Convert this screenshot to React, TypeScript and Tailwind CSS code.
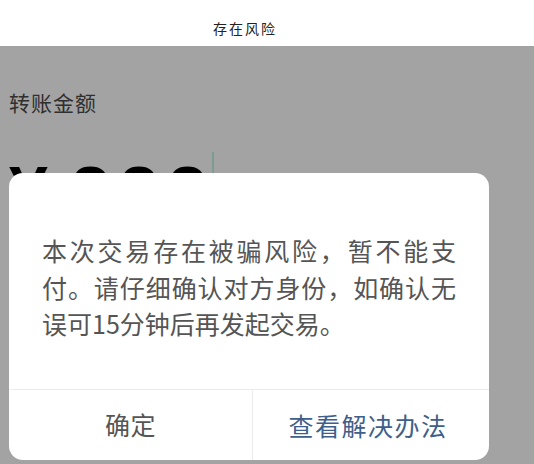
import React from 'react';

const cjk = { fontFamily: '"Noto Sans CJK SC", "Noto Sans", sans-serif' };
const latin = { fontFamily: '"Liberation Sans", Arial, sans-serif' };

export default function App() {
  return (
    <div lang="zh-CN" className="w-[534px] h-[464px] overflow-hidden flex flex-col bg-white" style={cjk}>
      {/* top bar */}
      <div className="h-[46px] shrink-0 flex items-center justify-center pt-[10px] pr-[44px] bg-white">
        <span className="text-[14px] leading-none tracking-[2px] text-[#222]">存在风险</span>
      </div>

      {/* dimmed page behind the dialog */}
      <div className="relative flex-1 bg-[#a3a3a3]">
        <div className="pl-[9px] pt-[44px]">
          <div className="text-[21px] leading-[24px] tracking-[1px] text-[#2f2f2f]">转账金额</div>
          <div className="mt-[43px] flex items-start">
            <span className="text-[70px] leading-[70px] font-bold text-black" style={latin}>
              ¥
            </span>
            <span className="ml-[23px] text-[70px] leading-[70px] font-bold tracking-[9.6px] text-black" style={latin}>
              888
            </span>
            <span className="ml-[-5px] mt-[-5px] w-[2px] h-[60px] bg-[#7c9c92]" />
          </div>
        </div>

        {/* dialog */}
        <div className="absolute left-[9px] top-[127px] w-[480px] h-[287px] bg-white rounded-[14px] flex flex-col overflow-hidden">
          <div className="h-[216px] px-[33px] pt-[59px]">
            <p className="text-[25px] leading-[36.5px] text-[#555] text-justify">
              本次交易存在被骗风险，暂不能支付。请仔细确认对方身份，如确认无误可15分钟后再发起交易。
            </p>
          </div>
          <div className="flex-1 flex border-t border-[#ececec]">
            <button className="w-[244px] flex items-center justify-center text-[25px] tracking-[0.5px] text-[#555] border-r border-[#ececec]">
              确定
            </button>
            <button className="flex-1 flex items-center justify-center pt-[1px] pr-[6px] text-[25px] tracking-[1.5px] text-[#3e5f8a]">
              查看解决办法
            </button>
          </div>
        </div>
      </div>
    </div>
  );
}
